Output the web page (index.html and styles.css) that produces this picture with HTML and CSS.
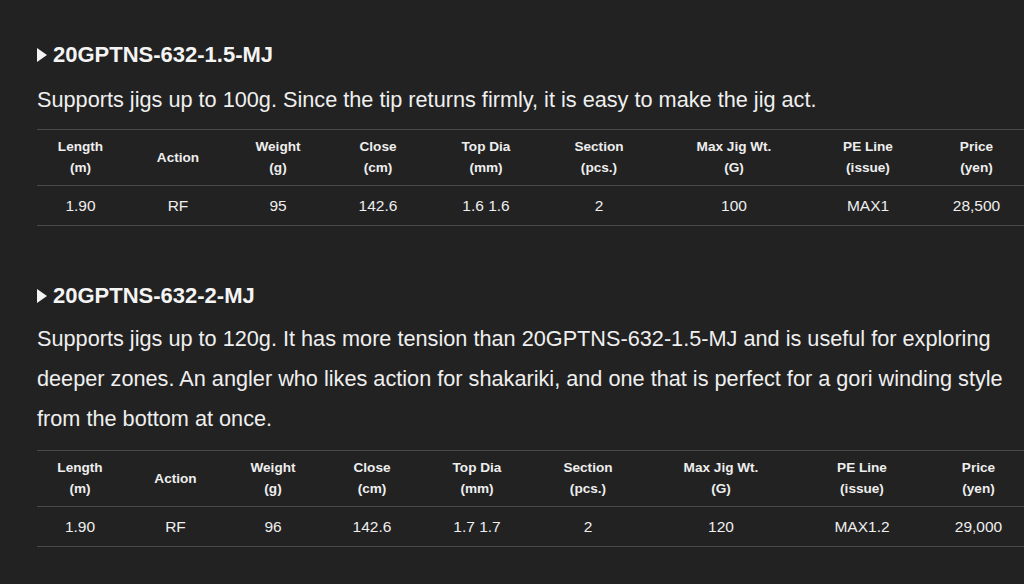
FILE: index.html
```html
<!DOCTYPE html>
<html>
<head>
<meta charset="utf-8">
<link rel="stylesheet" href="styles.css">
</head>
<body>
<div class="page">
  <section class="model">
    <h3 class="model-title"><span class="arrow"></span>20GPTNS-632-1.5-MJ</h3>
    <p class="desc">Supports jigs up to 100g. Since the tip returns firmly, it is easy to make the jig act.</p>
    <table class="spec spec-a">
      <colgroup>
        <col class="c1"><col class="c2"><col class="c3"><col class="c4"><col class="c5"><col class="c6"><col class="c7"><col class="c8"><col class="c9">
      </colgroup>
      <thead>
        <tr>
          <th>Length<br>(m)</th><th>Action</th><th>Weight<br>(g)</th><th>Close<br>(cm)</th><th>Top Dia<br>(mm)</th><th>Section<br>(pcs.)</th><th>Max Jig Wt.<br>(G)</th><th>PE Line<br>(issue)</th><th>Price<br>(yen)</th>
        </tr>
      </thead>
      <tbody>
        <tr>
          <td>1.90</td><td>RF</td><td>95</td><td>142.6</td><td>1.6 1.6</td><td>2</td><td>100</td><td>MAX1</td><td>28,500</td>
        </tr>
      </tbody>
    </table>
  </section>
  <section class="model">
    <h3 class="model-title"><span class="arrow"></span>20GPTNS-632-2-MJ</h3>
    <p class="desc desc-long">Supports jigs up to 120g. It has more tension than 20GPTNS-632-1.5-MJ and is useful for exploring deeper zones. An angler who likes action for shakariki, and one that is perfect for a gori winding style from the bottom at once.</p>
    <table class="spec spec-b">
      <colgroup>
        <col class="c1"><col class="c2"><col class="c3"><col class="c4"><col class="c5"><col class="c6"><col class="c7"><col class="c8"><col class="c9">
      </colgroup>
      <thead>
        <tr>
          <th>Length<br>(m)</th><th>Action</th><th>Weight<br>(g)</th><th>Close<br>(cm)</th><th>Top Dia<br>(mm)</th><th>Section<br>(pcs.)</th><th>Max Jig Wt.<br>(G)</th><th>PE Line<br>(issue)</th><th>Price<br>(yen)</th>
        </tr>
      </thead>
      <tbody>
        <tr>
          <td>1.90</td><td>RF</td><td>96</td><td>142.6</td><td>1.7 1.7</td><td>2</td><td>120</td><td>MAX1.2</td><td>29,000</td>
        </tr>
      </tbody>
    </table>
  </section>
</div>
</body>
</html>
```
FILE: styles.css
```css
html, body {
  margin: 0;
  padding: 0;
  background: #222222;
  overflow: hidden;
}
body {
  font-family: "Liberation Sans", Arial, sans-serif;
  color: #eeeeee;
}
.page {
  padding: 41px 0 0 37px;
  width: 990px;
}
.model {
  margin-bottom: 56px;
}
.model-title {
  margin: 0;
  font-size: 22px;
  font-weight: bold;
  line-height: 28px;
  display: flex;
  align-items: center;
  color: #f4f4f4;
}
.arrow {
  width: 0;
  height: 0;
  border-left: 10px solid #f4f4f4;
  border-top: 7px solid transparent;
  border-bottom: 7px solid transparent;
  margin-right: 6px;
}
.desc {
  margin: 11px 0 9px;
  font-size: 21.7px;
  line-height: 40px;
  color: #efefef;
}
.desc-long {
  margin-top: 9px;
  margin-bottom: 11px;
}
.spec {
  width: 990px;
  table-layout: fixed;
  border-collapse: collapse;
  text-align: center;
}
.spec-a .c1 { width: 87px; }
.spec-a .c2 { width: 108px; }
.spec-a .c3 { width: 92px; }
.spec-a .c4 { width: 108px; }
.spec-a .c5 { width: 108px; }
.spec-a .c6 { width: 118px; }
.spec-a .c7 { width: 152px; }
.spec-a .c8 { width: 116px; }
.spec-a .c9 { width: 101px; }
.spec-b .c1 { width: 86px; }
.spec-b .c2 { width: 105px; }
.spec-b .c3 { width: 90px; }
.spec-b .c4 { width: 108px; }
.spec-b .c5 { width: 102px; }
.spec-b .c6 { width: 120px; }
.spec-b .c7 { width: 146px; }
.spec-b .c8 { width: 136px; }
.spec-b .c9 { width: 97px; }
.spec th {
  font-size: 13.6px;
  font-weight: bold;
  line-height: 21px;
  padding: 6px 0 7px;
  border-top: 1px solid #4a4a4a;
  border-bottom: 1px solid #4a4a4a;
  color: #eeeeee;
}
.spec td {
  font-size: 15.5px;
  line-height: 20px;
  padding: 10px 0 9px;
  border-bottom: 1px solid #4a4a4a;
  color: #eeeeee;
}
```
